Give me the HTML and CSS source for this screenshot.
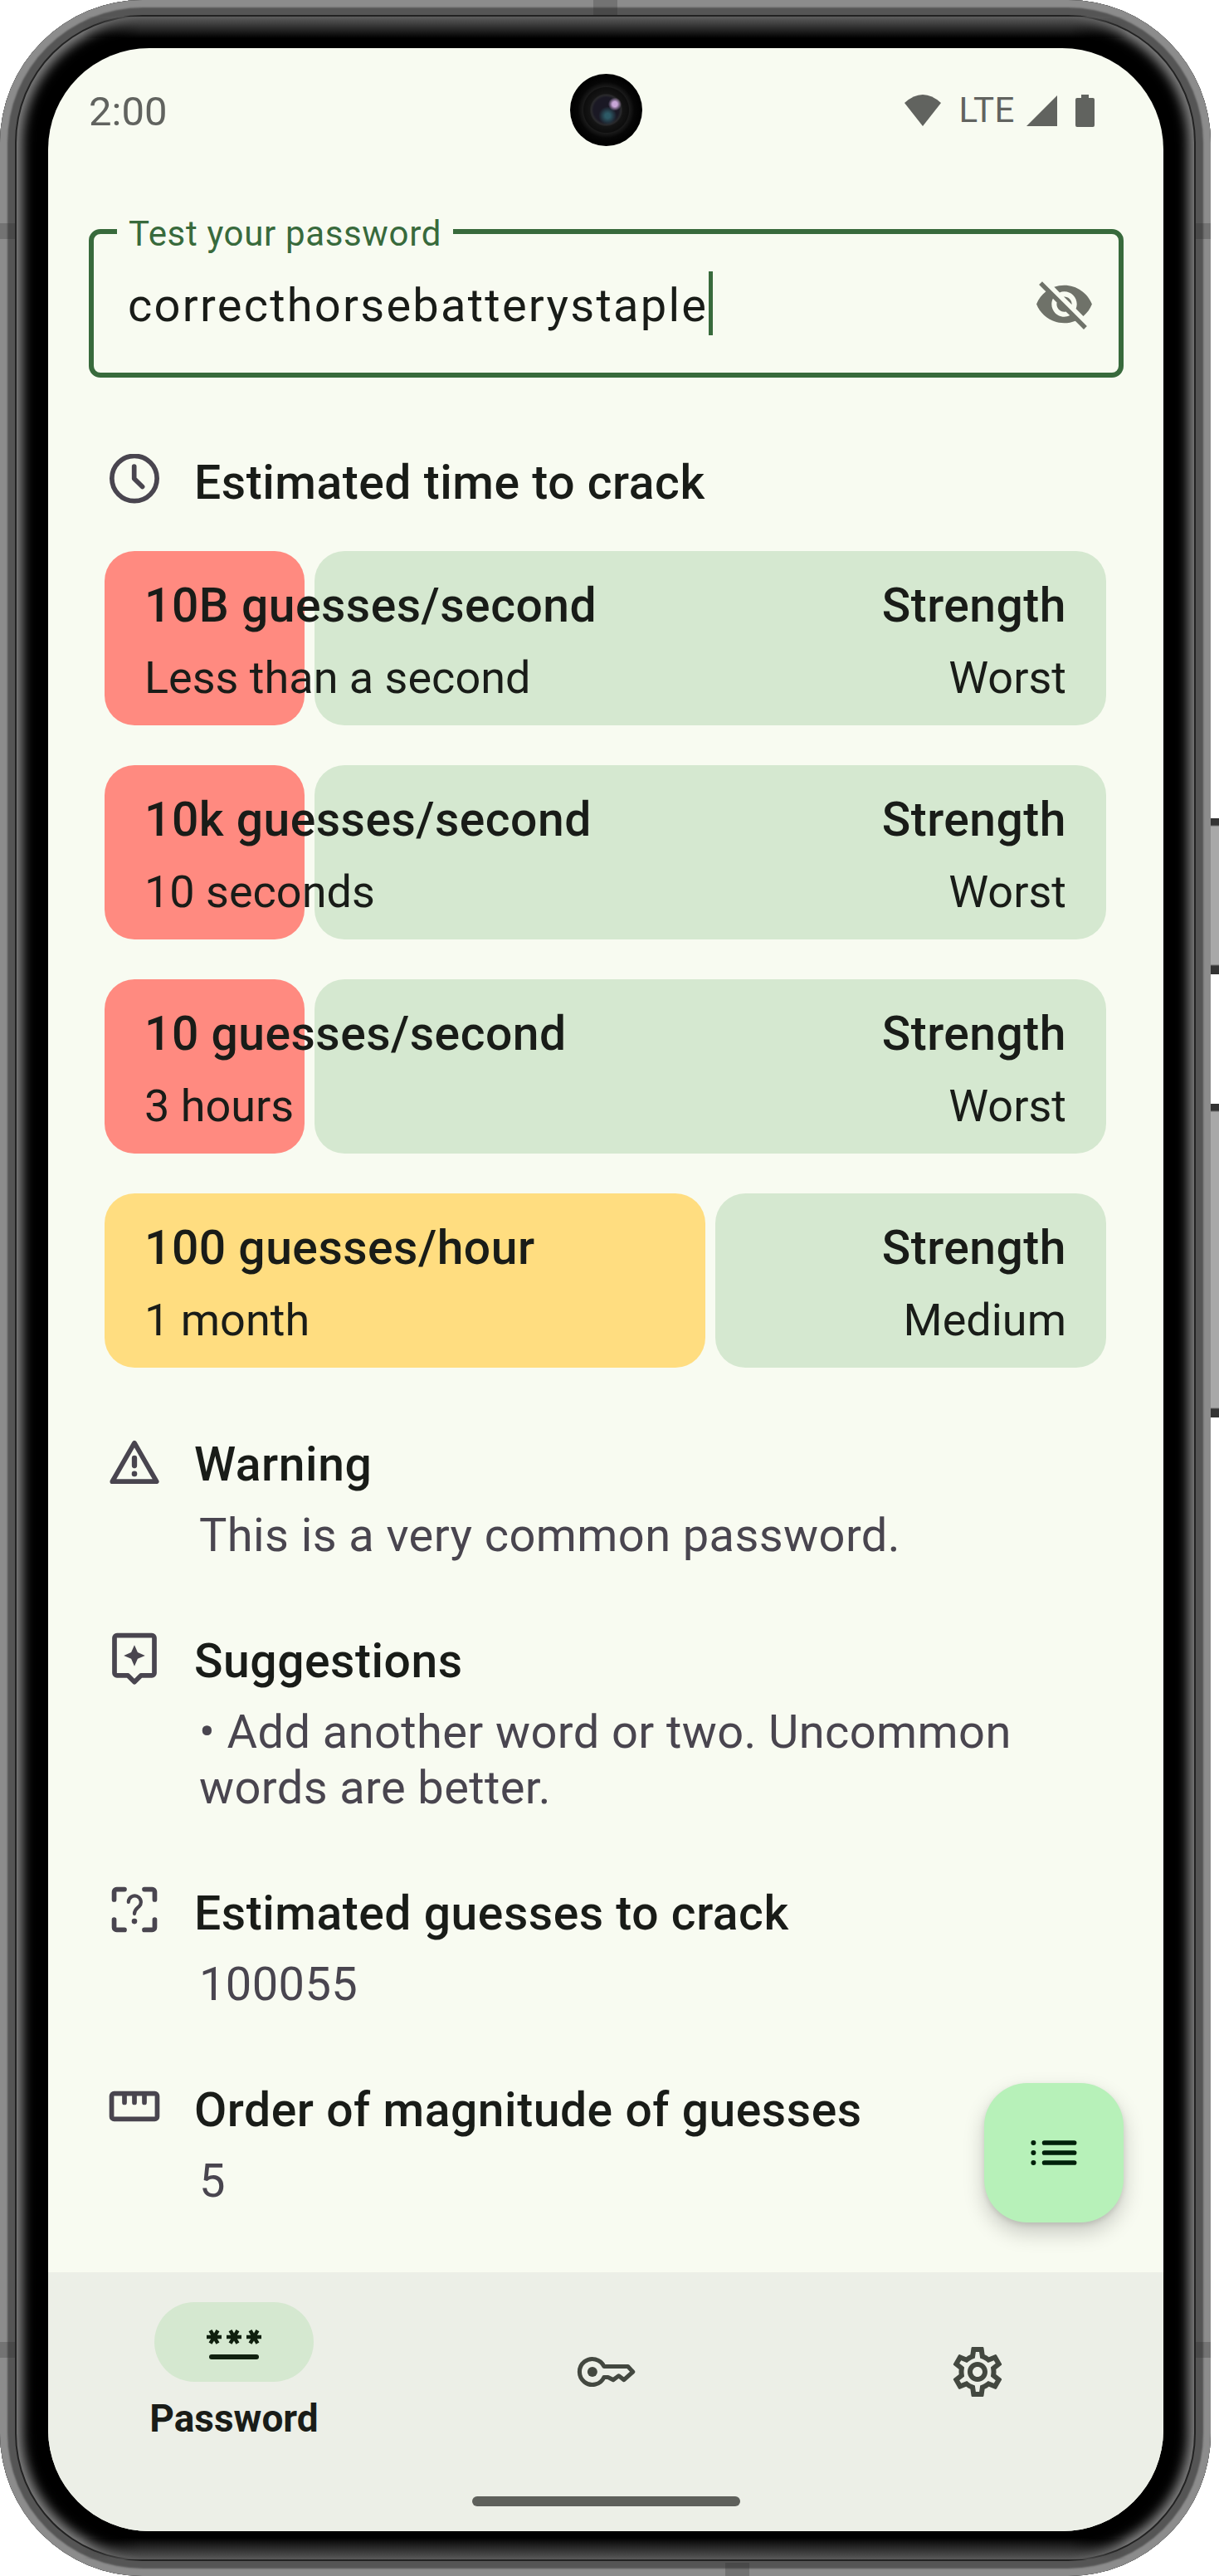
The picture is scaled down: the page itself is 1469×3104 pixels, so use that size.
FILE: index.html
```html
<!DOCTYPE html>
<html lang="en">
<head>
    <meta charset="UTF-8">
    <meta name="viewport" content="width=device-width, initial-scale=1.0">
    <title>Password strength</title>
    <link rel="stylesheet" href="styles.css">
</head>
<body>
    <div class="phone">
        <span class="side-button volume"></span>
        <span class="side-button power"></span>
        <span class="band band-top"></span>
        <span class="band band-bottom"></span>
        <span class="band band-left-top"></span>
        <span class="band band-right-top"></span>
        <span class="band band-left-bottom"></span>
        <span class="band band-right-bottom"></span>

        <div class="screen">
            <div class="camera"></div>

            <div class="status-bar">
                <span class="clock">2:00</span>
                <div class="status-icons">
                    <svg class="wifi" viewBox="0 0 44 38"><path d="M0 10Q22-10 44 10L22 38Z"/></svg>
                    <span class="lte">LTE</span>
                    <svg class="signal" viewBox="0 0 37 37"><path d="M37 0V37H0Z"/></svg>
                    <svg class="battery" viewBox="0 0 23 39"><path d="M7 0H16V4H21Q23 4 23 6V37Q23 39 21 39H2Q0 39 0 37V6Q0 4 2 4H7Z"/></svg>
                </div>
            </div>

            <div class="content">
                <fieldset class="field">
                    <legend>Test your password</legend>
                    <div class="field-row">
                        <div class="field-value">correcthorsebatterystaple<span class="caret"></span></div>
                        <svg class="eye" viewBox="0 0 24 24"><path d="M12 7c2.76 0 5 2.24 5 5 0 .65-.13 1.26-.36 1.83l2.92 2.92c1.51-1.26 2.7-2.89 3.43-4.75-1.73-4.39-6-7.5-11-7.5-1.4 0-2.74.25-3.98.7l2.16 2.16C10.74 7.13 11.35 7 12 7zM2 4.27l2.28 2.28.46.46C3.08 8.3 1.78 10.02 1 12c1.73 4.39 6 7.5 11 7.5 1.55 0 3.03-.3 4.38-.84l.42.42L19.73 22 21 20.73 3.27 3 2 4.27zM7.53 9.8l1.55 1.55c-.05.21-.08.43-.08.65 0 1.66 1.34 3 3 3 .22 0 .44-.03.65-.08l1.55 1.55c-.67.33-1.41.53-2.2.53-2.76 0-5-2.24-5-5 0-.79.2-1.53.53-2.2zm4.31-.78l3.15 3.15.02-.16c0-1.66-1.34-3-3-3l-.17.01z"/></svg>
                    </div>
                </fieldset>

                <div class="details">
                    <div class="info-head time-head">
                        <svg class="icon" viewBox="0 0 24 24"><circle class="line" cx="12" cy="9.85" r="9.05"/><path class="line" d="M11.9 5V9.9L15.2 13.2"/></svg>
                        <h3>Estimated time to crack</h3>
                    </div>

                    <div class="crack-list">
                        <div class="crack-row">
                            <div class="crack-time worst" style="width: 241px">
                                <strong>10B guesses/second</strong>
                                <span>Less than a second</span>
                            </div>
                            <div class="crack-strength">
                                <strong>Strength</strong>
                                <span>Worst</span>
                            </div>
                        </div>
                        <div class="crack-row">
                            <div class="crack-time worst" style="width: 241px">
                                <strong>10k guesses/second</strong>
                                <span>10 seconds</span>
                            </div>
                            <div class="crack-strength">
                                <strong>Strength</strong>
                                <span>Worst</span>
                            </div>
                        </div>
                        <div class="crack-row">
                            <div class="crack-time worst" style="width: 241px">
                                <strong>10 guesses/second</strong>
                                <span>3 hours</span>
                            </div>
                            <div class="crack-strength">
                                <strong>Strength</strong>
                                <span>Worst</span>
                            </div>
                        </div>
                        <div class="crack-row">
                            <div class="crack-time medium" style="width: 724px">
                                <strong>100 guesses/hour</strong>
                                <span>1 month</span>
                            </div>
                            <div class="crack-strength">
                                <strong>Strength</strong>
                                <span>Medium</span>
                            </div>
                        </div>
                    </div>

                    <div class="info-block">
                        <div class="info-head">
                            <svg class="icon" viewBox="0 0 24 24"><path class="line" d="M12 2.9L20.9 18.4H3.1Z"/><path class="line thick" d="M12 9V12"/><circle class="dot" cx="12" cy="15.3" r="1.1"/></svg>
                            <h3>Warning</h3>
                        </div>
                        <p>This is a very common password.</p>
                    </div>

                    <div class="info-block">
                        <div class="info-head">
                            <svg class="icon" viewBox="0 0 24 24"><path class="line" d="M5 1.2H19a1 1 0 0 1 1 1V16.3a1 1 0 0 1-1 1H14.6L12 19.9 9.4 17.3H5a1 1 0 0 1-1-1V2.2a1 1 0 0 1 1-1Z"/><path class="dot" d="M12 5.05L13.3 8 16.27 9.33 13.3 10.6 12 13.6 10.7 10.6 7.73 9.33 10.7 8Z"/></svg>
                            <h3>Suggestions</h3>
                        </div>
                        <p>• Add another word or two. Uncommon words are better.</p>
                    </div>

                    <div class="info-block">
                        <div class="info-head">
                            <svg class="icon" viewBox="0 0 24 24"><path class="line" d="M3.85 6V2.85a1 1 0 0 1 1-1H8M16 1.85H19.15a1 1 0 0 1 1 1V6M3.85 14V17.15a1 1 0 0 0 1 1H8M20.15 14V17.15a1 1 0 0 1-1 1H16"/><path class="line thin" d="M9.6 7a2.5 2.5 0 1 1 4.3 1.7c-1 .9-1.9 1.3-1.9 3"/><circle class="dot" cx="12" cy="14.7" r="1.1"/></svg>
                            <h3>Estimated guesses to crack</h3>
                        </div>
                        <p>100055</p>
                    </div>

                    <div class="info-block">
                        <div class="info-head">
                            <svg class="icon" viewBox="0 0 24 24"><rect class="line" x="2.85" y="4.85" width="18.3" height="10.3" rx="1"/><path class="line" d="M8 5V8.5M12 5V8.5M16 5V8.5"/></svg>
                            <h3>Order of magnitude of guesses</h3>
                        </div>
                        <p>5</p>
                    </div>
                </div>

                <button class="fab">
                    <svg viewBox="0 0 24 24"><path class="list-bars" d="M8.2 8H20.2M8.2 12H20.2M8.2 16H20.2"/><circle cx="3.8" cy="8" r="1"/><circle cx="3.8" cy="12" r="1"/><circle cx="3.8" cy="16" r="1"/></svg>
                </button>
            </div>

            <nav class="nav">
                <div class="nav-items">
                    <div class="nav-item active">
                        <div class="nav-pill">
                            <svg viewBox="0 0 24 24"><rect x="2" y="17" width="20" height="2" rx="1"/><path d="M3.15 12.95L4 11.47l.85 1.48 1.3-.75-.85-1.48H7v-1.5H5.3l.85-1.47L4.85 7 4 8.47 3.15 7l-1.3.75.85 1.47H1v1.5h1.7l-.85 1.48 1.3.75zM9.85 12.2l1.3.75.85-1.48.85 1.48 1.3-.75-.85-1.48H15v-1.5h-1.7l.85-1.47L12.85 7 12 8.47 11.15 7l-1.3.75.85 1.47H9v1.5h1.7l-.85 1.48zM23 9.22h-1.7l.85-1.47L20.85 7 20 8.47 19.15 7l-1.3.75.85 1.47H17v1.5h1.7l-.85 1.48 1.3.75.85-1.48.85 1.48 1.3-.75-.85-1.48H23V9.22z"/></svg>
                        </div>
                        <span>Password</span>
                    </div>
                    <div class="nav-item">
                        <svg class="nav-icon" viewBox="0 0 24 24"><path class="nav-line" d="M11.3 9.85H20.9L22.9 12 19.3 15.2 17.2 13.6 15 15.2 12.9 14.15H11.3A5.15 5.15 0 1 1 11.3 9.85Z"/><circle cx="6.62" cy="12" r="2"/></svg>
                    </div>
                    <div class="nav-item">
                        <svg class="nav-icon" viewBox="0 0 24 24"><path d="M19.43 12.98c.04-.32.07-.64.07-.98 0-.34-.03-.66-.07-.98l2.11-1.65c.19-.15.24-.42.12-.64l-2-3.46c-.09-.16-.26-.25-.44-.25-.06 0-.12.01-.17.03l-2.49 1c-.52-.4-1.08-.73-1.69-.98l-.38-2.65C14.46 2.18 14.25 2 14 2h-4c-.25 0-.46.18-.49.42l-.38 2.65c-.61.25-1.17.59-1.69.98l-2.49-1c-.06-.02-.12-.03-.18-.03-.17 0-.34.09-.43.25l-2 3.46c-.13.22-.07.49.12.64l2.11 1.65c-.04.32-.07.65-.07.98 0 .33.03.66.07.98l-2.11 1.65c-.19.15-.24.42-.12.64l2 3.46c.09.16.26.25.44.25.06 0 .12-.01.17-.03l2.49-1c.52.4 1.08.73 1.69.98l.38 2.65c.03.24.24.42.49.42h4c.25 0 .46-.18.49-.42l.38-2.65c.61-.25 1.17-.59 1.69-.98l2.49 1c.06.02.12.03.18.03.17 0 .34-.09.43-.25l2-3.46c.12-.22.07-.49-.12-.64l-2.11-1.65zm-1.98-1.71c.04.31.05.52.05.73 0 .21-.02.43-.05.73l-.14 1.13.89.7 1.08.84-.7 1.21-1.27-.51-1.04-.42-.9.68c-.43.32-.84.56-1.25.73l-1.06.43-.16 1.13-.2 1.35h-1.4l-.19-1.35-.16-1.13-1.06-.43c-.43-.18-.83-.41-1.23-.71l-.91-.7-1.06.43-1.27.51-.7-1.21 1.08-.84.89-.7-.14-1.13c-.03-.31-.05-.54-.05-.74s.02-.43.05-.73l.14-1.13-.89-.7-1.08-.84.7-1.21 1.27.51 1.04.42.9-.68c.43-.32.84-.56 1.25-.73l1.06-.43.16-1.13.2-1.35h1.39l.19 1.35.16 1.13 1.06.43c.43.18.83.41 1.23.71l.91.7 1.06-.43 1.27-.51.7 1.21-1.07.85-.89.7.14 1.13zM12 8c-2.21 0-4 1.79-4 4s1.79 4 4 4 4-1.79 4-4-1.79-4-4-4zm0 6c-1.1 0-2-.9-2-2s.9-2 2-2 2 .9 2 2-.9 2-2 2z"/></svg>
                    </div>
                </div>
                <div class="home-bar"></div>
            </nav>
        </div>
    </div>
</body>
</html>
```

FILE: styles.css
```css
* {
    box-sizing: border-box;
}

body {
    margin: 0;
    background-color: #fff;
    font-family: Roboto, sans-serif;
    color: #191c18;
    overflow: hidden;
}

/* Device frame */
.phone {
    position: relative;
    width: 1459px;
    height: 3104px;
    padding: 58px 57px 54px 58px;
    border-radius: 172px;
    background-color: #000;
    box-shadow:
        inset 0 0 2px 9px #8c8c8c,
        inset 0 0 0 18px #555,
        inset 0 0 0 20px #222,
        inset 0 0 14px 27px #868686;
}

/* top and bottom of the bezel are darker than the sides */
.phone::before,
.phone::after {
    content: "";
    position: absolute;
    left: 100px;
    right: 100px;
    height: 26px;
    -webkit-mask-image: linear-gradient(90deg, transparent, #000 70px, #000 calc(100% - 70px), transparent);
    mask-image: linear-gradient(90deg, transparent, #000 70px, #000 calc(100% - 70px), transparent);
}

.phone::before {
    top: 20px;
    background: linear-gradient(#5e5e5e, #000);
}

.phone::after {
    bottom: 20px;
    background: linear-gradient(#000, #5a5a5a);
}

.side-button {
    position: absolute;
    left: 1459px;
    width: 10px;
    background: linear-gradient(#333 0 8px, #a8a8a8 10px calc(100% - 12px), #333 calc(100% - 10px));
}

.volume {
    top: 986px;
    height: 188px;
}

.power {
    top: 1330px;
    height: 378px;
}

.band {
    position: absolute;
    background-color: rgba(40, 40, 40, 0.25);
}

.band-top {
    top: 0;
    left: 715px;
    width: 29px;
    height: 18px;
}

.band-bottom {
    top: 3088px;
    left: 874px;
    width: 29px;
    height: 16px;
}

.band-left-top,
.band-right-top,
.band-left-bottom,
.band-right-bottom {
    width: 18px;
    height: 19px;
}

.band-left-top,
.band-left-bottom {
    left: 0;
}

.band-right-top,
.band-right-bottom {
    left: 1441px;
}

.band-left-top,
.band-right-top {
    top: 269px;
}

.band-left-bottom,
.band-right-bottom {
    top: 2822px;
}

.screen {
    position: relative;
    display: flex;
    flex-direction: column;
    height: 2992px;
    border-radius: 122px;
    background-color: #f8fbf1;
    overflow: hidden;
}

.camera {
    position: absolute;
    top: 31px;
    left: 629px;
    width: 87px;
    height: 87px;
    border-radius: 50%;
    background:
        radial-gradient(circle at 62% 42%, #c9a6d8 0 3px, rgba(110, 80, 130, 0) 8px),
        radial-gradient(circle at 52% 58%, #2d5a66 0 3px, rgba(30, 60, 70, 0) 11px),
        radial-gradient(circle, #1a1824 0 15px, #2a2a2c 18px, #141414 20px, #0d0d0d 27px, #1a1a1a 28px, #060606 34px, #000 43px);
}

/* Status bar */
.status-bar {
    display: flex;
    justify-content: space-between;
    height: 198px;
    padding: 52px 83px 0 49px;
    color: #61635f;
    fill: #61635f;
}

.clock {
    font-size: 49px;
    line-height: 50px;
}

.status-icons {
    display: flex;
    align-items: center;
    height: 40px;
    margin-top: 3px;
}

.wifi {
    width: 44px;
    height: 38px;
}

.lte {
    margin: 0 14px 0 22px;
    font-size: 42px;
    line-height: 40px;
    letter-spacing: 0.5px;
}

.signal {
    width: 37px;
    height: 37px;
    margin-right: 22px;
}

.battery {
    width: 23px;
    height: 39px;
}

/* Main column */
.content {
    position: relative;
    flex: 1;
    padding: 0 48px 0 49px;
}

.field {
    min-width: 0;
    margin: 0;
    padding: 0;
    border: 6px solid #386a3c;
    border-radius: 14px;
}

.field legend {
    margin-left: 28px;
    padding: 6px 14px 0;
    font-size: 42px;
    line-height: 40px;
    letter-spacing: 0.65px;
    color: #386a3c;
}

.field-row {
    display: flex;
    justify-content: space-between;
    align-items: center;
    height: 147px;
    padding: 0 29px 15px 41px;
}

.field-value {
    font-size: 56px;
    line-height: 68px;
    letter-spacing: 2.25px;
}

.caret {
    display: inline-block;
    width: 5px;
    height: 77px;
    margin: -20px 0 -20px 1px;
    vertical-align: 3px;
    background-color: #386a3c;
}

.eye {
    width: 73px;
    height: 73px;
    margin-bottom: 4px;
    fill: #6f7269;
}

.details {
    margin: 94px 21px 0 19px;
}

.info-head {
    display: flex;
    align-items: flex-start;
    gap: 36px;
}

.info-head h3 {
    margin: -1px 0 1px;
    font-size: 57px;
    line-height: 68px;
    letter-spacing: 0.55px;
    font-weight: 500;
}

.icon {
    flex: none;
    width: 72px;
    height: 72px;
    margin: -2px 0;
}

.line {
    fill: none;
    stroke: #49454f;
    stroke-width: 1.9;
    stroke-linecap: round;
    stroke-linejoin: round;
}

.line.thick {
    stroke-width: 2.1;
}

.line.thin {
    stroke-width: 1.4;
}

.dot {
    fill: #49454f;
}

/* Crack time rows */
.crack-list {
    display: flex;
    flex-direction: column;
    gap: 48px;
    margin-top: 47px;
}

.crack-row {
    display: flex;
    gap: 12px;
    height: 210px;
}

.crack-time,
.crack-strength {
    display: flex;
    flex-direction: column;
    gap: 19px;
    padding: 32px 48px 0 48px;
    border-radius: 36px;
    white-space: nowrap;
    font-size: 54px;
    line-height: 68px;
}

.crack-time strong,
.crack-strength strong {
    font-size: 57px;
    letter-spacing: 0.5px;
    font-weight: 500;
}

.crack-time {
    position: relative;
    z-index: 1;
    flex: none;
}

.crack-time.worst {
    background-color: #ff8a80;
}

.crack-time.medium {
    background-color: #ffdd80;
}

.crack-strength {
    flex: 1;
    text-align: right;
    background-color: #d5e8d0;
}

/* Info blocks */
.info-block {
    margin-top: 84px;
}

.info-block p {
    margin: 17px 0 0 114px;
    padding-bottom: 1px;
    max-width: 1010px;
    font-size: 56px;
    line-height: 67px;
    letter-spacing: 0.4px;
    color: #49454f;
}

.fab {
    position: absolute;
    right: 48px;
    bottom: 60px;
    width: 168px;
    height: 168px;
    padding: 48px;
    border: none;
    border-radius: 52px;
    background-color: #b7f1b9;
    box-shadow: 0 12px 26px rgba(0, 0, 0, 0.2), 0 3px 6px rgba(0, 0, 0, 0.1);
}

.fab svg {
    display: block;
    width: 72px;
    height: 72px;
    fill: #00210b;
}

.list-bars {
    fill: none;
    stroke: #00210b;
    stroke-width: 1.9;
    stroke-linecap: round;
}

/* Bottom navigation */
.nav {
    flex: none;
    height: 312px;
    background-color: #ecefe7;
}

.nav-items {
    display: grid;
    grid-template-columns: repeat(3, 1fr);
    height: 270px;
}

.nav-item {
    display: flex;
    flex-direction: column;
    align-items: center;
    padding-top: 84px;
}

.nav-item.active {
    padding-top: 36px;
}

.nav-item.active span {
    margin-top: 20px;
    font-size: 46px;
    line-height: 48px;
    font-weight: 700;
}

.nav-pill {
    display: flex;
    justify-content: center;
    align-items: center;
    width: 192px;
    height: 96px;
    border-radius: 48px;
    background-color: #d5e8d0;
}

.nav-pill svg {
    width: 72px;
    height: 72px;
    fill: #10200f;
}

.nav-icon {
    width: 72px;
    height: 72px;
    fill: #434840;
}

.nav-line {
    fill: none;
    stroke: #434840;
    stroke-width: 1.7;
    stroke-linejoin: round;
}

.home-bar {
    width: 323px;
    height: 12px;
    margin: 0 auto;
    border-radius: 6px;
    background-color: #5e605b;
}
```
